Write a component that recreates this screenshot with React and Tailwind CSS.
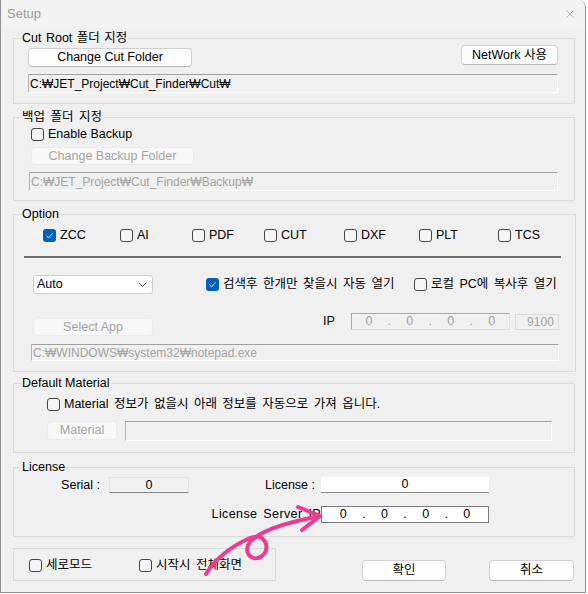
import React from 'react';
import { X } from 'lucide-react';

const FONT = "font-['Liberation_Sans','Noto_Sans_CJK_KR',sans-serif]";

function Check({ checked, label, className = '' }) {
  return (
    <label className={`flex items-center h-[15px] leading-[15px] ${className}`}>
      {checked ? (
        <span className="w-[13px] h-[13px] rounded-[3px] bg-[#005fb8] flex items-center justify-center shrink-0">
          <svg width="9" height="9" viewBox="0 0 9 9">
            <path d="M1.5 4.8 L3.6 6.8 L7.6 2.4" fill="none" stroke="#fff" strokeWidth="1" />
          </svg>
        </span>
      ) : (
        <span className="w-[13px] h-[13px] rounded-[3px] border border-[#454545] bg-[#f6f6f6] shrink-0" />
      )}
      <span className="ml-[4px] whitespace-nowrap">{label}</span>
    </label>
  );
}

function Btn({ children, disabled, className = '' }) {
  return (
    <button
      className={`rounded-[4px] border flex items-center justify-center leading-none ${
        disabled
          ? 'bg-[#f8f8f8] border-[#ebebeb] text-[#a3a3a3]'
          : 'bg-[#fdfdfd] border-[#d0d0d0] border-b-[#b8b8b8] text-black'
      } ${className}`}
    >
      {children}
    </button>
  );
}

function Field({ children, disabled, className = '' }) {
  return (
    <div
      className={`border border-t-[#a0a0a0] border-l-[#b4b4b4] border-r-white border-b-white flex items-center pl-[1px] text-[12px] leading-none whitespace-nowrap overflow-hidden bg-[#f0f0f0] ${
        disabled ? 'text-[#a3a3a3]' : 'text-black'
      } ${className}`}
    >
      {children}
    </div>
  );
}

// group box: fieldset keeps the legend on the border, padding lives on the inner div
function Group({ title, className = '', inner = '', children }) {
  return (
    <fieldset className={`border border-[#dadada] ${className}`}>
      <legend className="ml-[7px] px-[1px] h-[14px] leading-[14px]">{title}</legend>
      <div className={inner}>{children}</div>
    </fieldset>
  );
}

function IpBox({ className = '' }) {
  return (
    <div className={`flex items-center justify-around px-[6px] leading-none ${className}`}>
      <span>0</span>
      <span>.</span>
      <span>0</span>
      <span>.</span>
      <span>0</span>
      <span>.</span>
      <span>0</span>
    </div>
  );
}

export default function App() {
  const types = [
    ['ZCC', true, 'w-[77px]'],
    ['AI', false, 'w-[72px]'],
    ['PDF', false, 'w-[72px]'],
    ['CUT', false, 'w-[80px]'],
    ['DXF', false, 'w-[75px]'],
    ['PLT', false, 'w-[79px]'],
    ['TCS', false, 'w-[60px]'],
  ];

  return (
    <div className={`w-[588px] h-[594px] bg-white relative text-[12.5px] text-black ${FONT}`}>
      <div className="w-[586px] h-[593px] bg-[#f0f0f0] border border-t-0 border-[#8f8f8f] rounded-tr-[8px] flex flex-col overflow-hidden">
        {/* title bar */}
        <div className="h-[27px] bg-[#f3f3f3] flex items-center justify-between pl-[6px] pr-[8px] shrink-0">
          <span className="text-[13px] text-[#9a9a9a]">Setup</span>
          <X size={14} strokeWidth={1} className="text-[#8a8a8a]" />
        </div>

        <div className="flex flex-col pl-[12px] pr-[10px]">
          {/* Cut root */}
          <Group title="Cut Root 폴더 지정" className="mt-[4px] [word-spacing:1px]" inner="pl-[14px] pr-[16px] pb-[10px]">
            <div className="flex items-start justify-between [word-spacing:0px]">
              <Btn className="mt-[3px] w-[164px] h-[19px]">Change Cut Folder</Btn>
              <Btn className="w-[97px] h-[20px]">NetWork 사용</Btn>
            </div>
            <Field className="mt-[7px] h-[19px]">C:₩JET_Project₩Cut_Finder₩Cut₩</Field>
          </Group>

          {/* Backup */}
          <Group title="백업 폴더 지정" className="mt-[6px] [word-spacing:2px]" inner="pl-[15px] pr-[16px] pb-[9px] [word-spacing:0px]">
            <Check label="Enable Backup" className="mt-[3px] ml-[2px]" />
            <Btn disabled className="mt-[5px] ml-[2px] w-[163px] h-[18px]">Change Backup Folder</Btn>
            <Field disabled className="mt-[7px] h-[19px]">C:₩JET_Project₩Cut_Finder₩Backup₩</Field>
          </Group>

          {/* Option */}
          <Group title="Option" className="mt-[6px]" inner="pl-[10px] pr-[16px] pb-[10px]">
            <div className="flex mt-[7px] ml-[19px]">
              {types.map(([t, c, w]) => (
                <Check key={t} label={t} checked={c} className={w} />
              ))}
            </div>
            <div className="mt-[13px] h-[2px] bg-[#6f6f6f] mr-[-2px]" />
            <div className="flex items-center mt-[17px] h-[19px]">
              <div className="ml-[9px] w-[120px] h-[19px] bg-white border border-[#cfcfcf] rounded-[3px] flex items-center justify-between pl-[3px] pr-[5px] leading-none">
                <span>Auto</span>
                <svg width="9" height="5" viewBox="0 0 9 5">
                  <path d="M0.5 0.5 L4.5 4.5 L8.5 0.5" fill="none" stroke="#555" strokeWidth="1" />
                </svg>
              </div>
              <Check checked label="검색후 한개만 찾을시 자동 열기" className="ml-[53px] w-[208px] [word-spacing:2px]" />
              <Check label="로컬 PC에 복사후 열기" className="[word-spacing:2px]" />
            </div>
            <div className="flex items-start mt-[19px]">
              <Btn disabled className="mt-[5px] ml-[9px] w-[120px] h-[18px]">Select App</Btn>
              <span className="ml-[170px] mt-[1px] leading-[15px]">IP</span>
              <IpBox className="ml-[16px] w-[159px] h-[17px] border border-[#a8a8a8] border-b-[#e0e0e0] border-r-[#e0e0e0] text-[#a3a3a3]" />
              <div className="ml-[5px] mt-[1px] w-[44px] h-[16px] border border-[#dcdcdc] text-[#a3a3a3] text-[12px] flex items-center justify-end pr-[4px] leading-none">9100</div>
            </div>
            <Field disabled className="mt-[8px] ml-[7px] h-[17px]">C:₩WINDOWS₩system32₩notepad.exe</Field>
          </Group>

          {/* Default material */}
          <Group title="Default Material" className="mt-[4px]" inner="pl-[33px] pr-[22px] pb-[11px]">
            <Check label="Material 정보가 없을시 아래 정보를 자동으로 가져 옵니다." className="mt-[7px] [word-spacing:2px]" />
            <div className="flex items-start mt-[9px]">
              <Btn disabled className="w-[70px] h-[19px]">Material</Btn>
              <Field disabled className="ml-[8px] flex-1 h-[20px]" />
            </div>
          </Group>

          {/* License */}
          <Group title="License" className="mt-[7px]" inner="pb-[13px]">
            <div className="flex items-center mt-[3px] h-[16px]">
              <span className="w-[86px] text-right whitespace-nowrap">Serial :</span>
              <div className="ml-[9px] w-[80px] h-[16px] border border-[#e2e2e2] border-b-[#8a8a8a] flex items-center justify-center leading-none">0</div>
              <span className="w-[126px] text-right whitespace-nowrap">License :</span>
              <div className="ml-[6px] w-[168px] h-[16px] bg-white border-b border-[#8a8a8a] flex items-center justify-center leading-none">0</div>
            </div>
            <div className="flex items-center mt-[13px] h-[17px]">
              <span className="w-[307px] text-right whitespace-nowrap tracking-[0.4px] [word-spacing:2px]">License Server IP</span>
              <IpBox className="w-[168px] h-[17px] bg-white border border-[#7a7a7a] px-[10px]" />
            </div>
          </Group>

          {/* bottom */}
          <div className="flex items-start mt-[11px]">
            <div className="w-[263px] h-[33px] border border-[#dadada] flex items-start pt-[9px] pl-[15px] [word-spacing:2px]">
              <Check label="세로모드" className="w-[110px]" />
              <Check label="시작시 전체화면" />
            </div>
            <Btn className="ml-[86px] mt-[12px] w-[84px] h-[21px]">확인</Btn>
            <Btn className="ml-[43px] mt-[12px] w-[85px] h-[21px]">취소</Btn>
          </div>
        </div>
      </div>

      {/* hand-drawn annotation */}
      <svg className="absolute left-0 top-0 pointer-events-none" width="588" height="594" viewBox="0 0 588 594">
        <g fill="none" stroke="#ef3a92" strokeWidth="4" strokeLinecap="round" strokeLinejoin="round">
          <path d="M206 574 C216 558 232 546 250 538 C264 532 272 548 262 556 C252 563 242 552 250 542 C262 529 290 522 320 516" />
          <path d="M298 507 L320 516 L302 530" />
        </g>
      </svg>
    </div>
  );
}
